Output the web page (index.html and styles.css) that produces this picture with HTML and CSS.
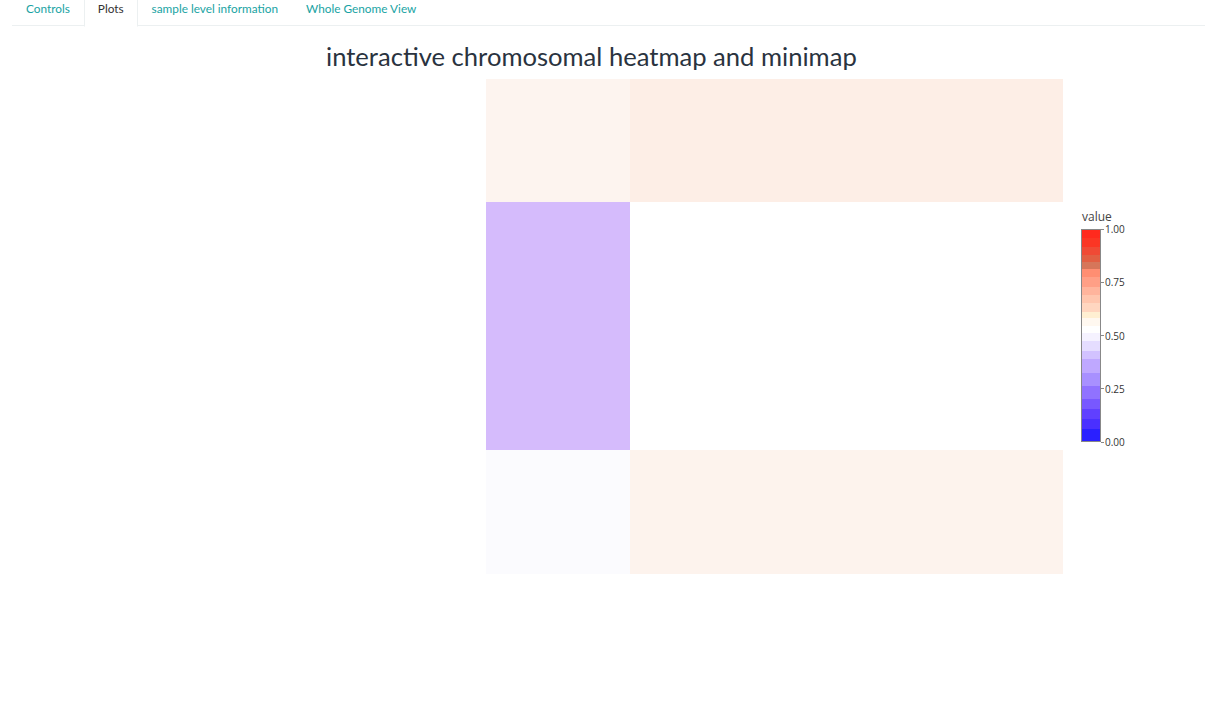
FILE: index.html
```html
<!DOCTYPE html>
<html>
<head>
<meta charset="utf-8">
<link rel="stylesheet" href="styles.css">
</head>
<body>
<div class="page">
  <ul class="tabs">
    <li class="tab"><a>Controls</a></li>
    <li class="tab active"><a>Plots</a></li>
    <li class="tab"><a>sample level information</a></li>
    <li class="tab"><a>Whole Genome View</a></li>
  </ul>
  <h2 class="title">interactive chromosomal heatmap and minimap</h2>
  <div class="plot">
    <div class="heatmap">
      <div class="cell c1"></div>
      <div class="cell c2"></div>
      <div class="cell c3"></div>
      <div class="cell c4"></div>
      <div class="cell c5"></div>
      <div class="cell c6"></div>
    </div>
    <div class="legend">
      <div class="legend-title">value</div>
      <div class="bar-row">
        <div class="bar"></div>
        <div class="axis">
          <div class="tick"><span class="mark"></span>1.00</div>
          <div class="tick"><span class="mark"></span>0.75</div>
          <div class="tick"><span class="mark"></span>0.50</div>
          <div class="tick"><span class="mark"></span>0.25</div>
          <div class="tick"><span class="mark"></span>0.00</div>
        </div>
      </div>
    </div>
  </div>
</div>
</body>
</html>
```
FILE: styles.css
```css
html, body {
  margin: 0;
  padding: 0;
  background: #ffffff;
}
body {
  font-family: Lato, "Open Sans", sans-serif;
  color: #2c3e50;
}
.page {
  padding-left: 12px;
}
.tabs {
  list-style: none;
  margin: 0;
  padding: 0;
  display: flex;
  border-bottom: 1px solid #ecf0f1;
  height: 26px;
  box-sizing: border-box;
}
.tab {
  margin-bottom: -1px;
}
.tab a {
  display: block;
  font-size: 11.8px;
  line-height: 18px;
  padding: 0 13px 8px 13px;
  color: #18a3a3;
  border: 1px solid transparent;
  border-top: none;
}
.tab.active a {
  color: #333333;
  border-color: #ecf0f1;
  border-bottom-color: #ffffff;
  background: #fff;
}
.title {
  margin: 0;
  padding: 14px 0 0 314px;
  font-size: 25.6px;
  font-weight: 400;
  line-height: 33px;
  color: #2a3340;
}
.plot {
  display: flex;
  padding-left: 474px;
  margin-top: 6px;
}
.heatmap {
  display: grid;
  grid-template-columns: 144px 433px;
  grid-template-rows: 123px 248px 124px;
}
.c1 { background: #fdf4ef; }
.c2 { background: #fdeee6; }
.c3 { background: #d5bbfc; }
.c4 { background: #ffffff; }
.c5 { background: #fbfbfe; }
.c6 { background: #fdf3ed; }
.legend {
  margin-left: 18px;
  margin-top: 131px;
  font-family: "Open Sans", sans-serif;
  color: #444;
}
.legend-title {
  font-size: 12px;
  line-height: 14px;
  padding-left: 1px;
  margin-bottom: 5px;
}
.bar-row {
  display: flex;
}
.bar {
  width: 18px;
  height: 211px;
  border: 1px solid #888;
  background: linear-gradient(to bottom,
    #ff2a1e 0%, #ff2a1e 3.9%,
    #fb3624 3.9%, #fb3624 8.1%,
    #f04a35 8.1%, #f04a35 12%,
    #e25f43 12%, #e25f43 15.2%,
    #d6765a 15.2%, #d6765a 18.3%,
    #ff8e72 18.3%, #ff8e72 22.2%,
    #ff9f86 22.2%, #ff9f86 26.9%,
    #ffb49c 26.9%, #ffb49c 30.8%,
    #ffc6ae 30.8%, #ffc6ae 34.7%,
    #ffd6c0 34.7%, #ffd6c0 38.7%,
    #ffefd2 38.7%, #ffefd2 41.8%,
    #fff8f0 41.8%, #fff8f0 45.7%,
    #ffffff 45.7%, #ffffff 48.8%,
    #f5f2ff 48.8%, #f5f2ff 52.7%,
    #e5ddff 52.7%, #e5ddff 57.4%,
    #d2c2ff 57.4%, #d2c2ff 61.3%,
    #bfa8ff 61.3%, #bfa8ff 67.6%,
    #a890ff 67.6%, #a890ff 73.9%,
    #9072ff 73.9%, #9072ff 80.1%,
    #7858ff 80.1%, #7858ff 84.8%,
    #6040ff 84.8%, #6040ff 89.5%,
    #4a30ff 89.5%, #4a30ff 94.2%,
    #2a20ff 94.2%, #2a20ff 100%);
}
.axis {
  display: flex;
  flex-direction: column;
  justify-content: space-between;
  height: 213px;
}
.tick {
  height: 0;
  display: flex;
  align-items: center;
  font-size: 10px;
  line-height: 12px;
  color: #333;
}
.mark {
  display: inline-block;
  width: 3px;
  height: 1px;
  background: #888;
  margin-right: 1px;
}
```
